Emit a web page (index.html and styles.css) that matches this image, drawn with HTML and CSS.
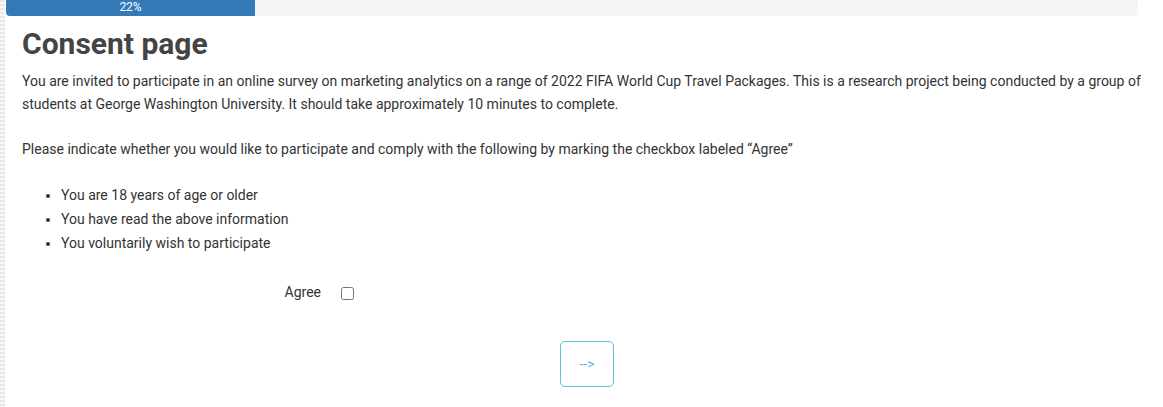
FILE: index.html
```html
<!DOCTYPE html>
<html>
<head>
<meta charset="utf-8">
<link rel="stylesheet" href="styles.css">
</head>
<body>
<div class="edge"></div>
<div class="page">
  <div class="progress">
    <div class="progress-bar" style="width:22%">22%</div>
  </div>
  <div class="content">
    <h1 class="title">Consent page</h1>
    <p class="text">You are invited to participate in an online survey on marketing analytics on a range of 2022 FIFA World Cup Travel Packages. This is a research project being conducted by a group of students at George Washington University. It should take approximately 10 minutes to complete.</p>
    <p class="text">Please indicate whether you would like to participate and comply with the following by marking the checkbox labeled “Agree”</p>
    <ul class="list">
      <li>You are 18 years of age or older</li>
      <li>You have read the above information</li>
      <li>You voluntarily wish to participate</li>
    </ul>
    <div class="agree-row">
      <label class="agree-label" for="agree">Agree</label>
      <span class="agree-box"><input type="checkbox" id="agree" class="checkbox"></span>
    </div>
    <div class="nav">
      <button class="next-btn">--&gt;</button>
    </div>
  </div>
</div>
</body>
</html>
```

FILE: styles.css
```css
html, body {
  margin: 0;
  padding: 0;
  background: #fff;
}
body {
  font-family: Roboto, "Liberation Sans", sans-serif;
  color: #333;
  display: flex;
  min-height: 407px;
}
.edge {
  width: 5px;
  flex: 0 0 5px;
  background: repeating-linear-gradient(to bottom, #e8e8e8 0 2px, #f7f7f7 2px 4px);
}
.page {
  margin-left: 1px;
  width: 1132px;
}
.progress {
  height: 16px;
  background: #f5f5f5;
  border-radius: 0 0 4px 4px;
  overflow: hidden;
  display: flex;
}
.progress-bar {
  background: #337ab7;
  color: #fff;
  font-size: 12px;
  line-height: 14px;
  text-align: center;
}
.content {
  padding: 0 0 0 16px;
}
.title {
  font-size: 30px;
  font-weight: 700;
  color: #444;
  margin: 12px 0 10px;
  line-height: 32px;
}
.text {
  font-size: 14px;
  line-height: 23px;
  margin: 0 -8px 22px 0;
}
.list {
  font-size: 14px;
  line-height: 24px;
  margin: 0;
  padding-left: 39px;
}
.agree-row {
  display: flex;
  align-items: center;
  margin-top: 29px;
  font-size: 14px;
  height: 16px;
}
.agree-label {
  width: 299px;
  text-align: right;
}
.agree-box {
  width: 33px;
  display: flex;
  justify-content: flex-end;
}
.checkbox {
  width: 13px;
  height: 13px;
  margin: 2px 0 0;
}
.nav {
  display: flex;
  justify-content: center;
  margin-top: 41px;
}
.next-btn {
  width: 54px;
  height: 46px;
  border: 1px solid #5bc0de;
  border-radius: 5px;
  background: #fff;
  color: #5bc0de;
  font-family: Roboto, "Liberation Sans", sans-serif;
  font-size: 14px;
  margin-left: 14px;
}
```
